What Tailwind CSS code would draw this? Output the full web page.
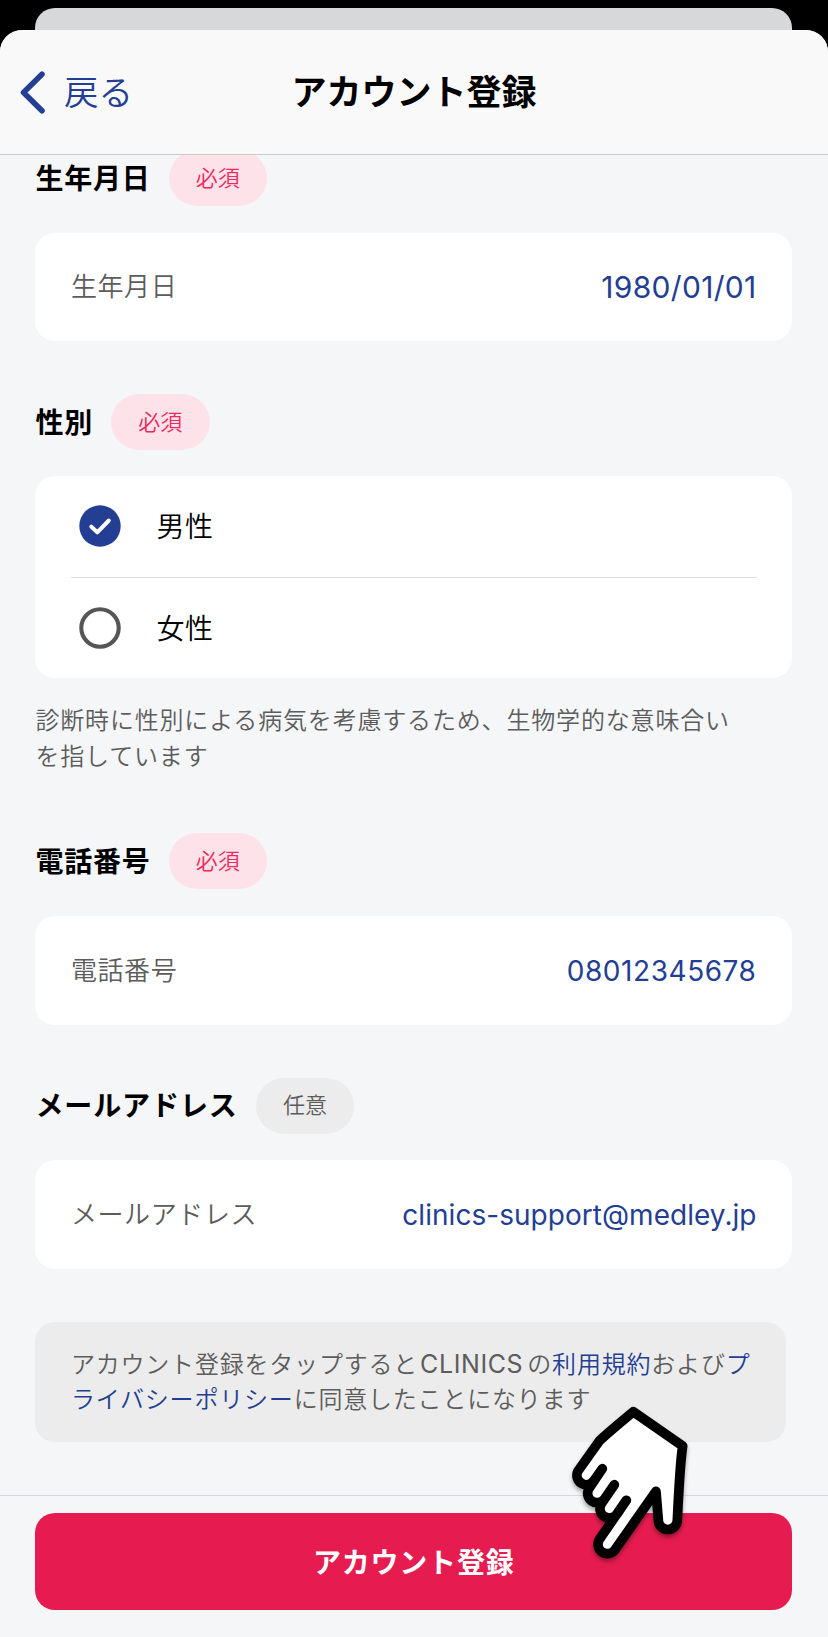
<!DOCTYPE html>
<html lang="ja">

<head>
    <meta charset="UTF-8">
    <title>アカウント登録</title>
    <script src="https://cdn.jsdelivr.net/npm/@tailwindcss/browser@4"></script>
</head>

<body class="bg-black font-['Inter','Noto_Sans_CJK_JP',sans-serif]">
    <div class="flex flex-col h-[1637px] pt-2 overflow-hidden">

        <!-- Sheet behind -->
        <div class="h-[44px] -mb-[22px] ml-[35.4px] mr-9 rounded-t-[20px] bg-[#d7d8da] shrink-0"></div>

        <!-- Current sheet -->
        <div class="relative flex flex-col grow rounded-t-[22px] overflow-hidden bg-[#f5f6f8]">

            <!-- Header -->
            <header class="relative z-10 grid grid-cols-3 items-center h-[125px] pt-[1px] shrink-0 bg-[#f9f9fa] border-b border-[#c9cacc]">
                <a href="#" class="flex items-center pl-5 text-[#233e92] text-[34.5px]">
                    <svg class="w-[26px] h-[44px]" viewBox="0 0 26 44" fill="none" stroke="currentColor" stroke-width="5.6" stroke-linecap="round" stroke-linejoin="round">
                        <path d="M22 3.2 L3.5 21.5 L22 39.8" />
                    </svg>
                    <span class="ml-[18px] font-[350]">戻る</span>
                </a>
                <h1 class="text-[35px] font-bold text-center whitespace-nowrap">アカウント登録</h1>
            </header>

            <main class="pl-[35.4px] pr-9 -mt-[5px]">

                <!-- Birth date -->
                <div class="flex items-center h-14 gap-[18px]">
                    <h2 class="pt-[2px] text-[28px] tracking-[0.8px] font-bold">生年月日</h2>
                    <span class="flex items-center justify-center w-[98.5px] h-14 rounded-full bg-[#fee2e9] text-[#ec2a5e] text-[22px] font-[350]">必須</span>
                </div>
                <div class="flex items-center justify-between h-[108px] mt-[27px] px-[35.5px] rounded-[20px] bg-white">
                    <span class="pb-[2px] text-[26px] tracking-[0.6px] text-[#5c5c5c] font-[350]">生年月日</span>
                    <span class="text-[30px] tracking-[0.3px] text-[#233e92]">1980/01/01</span>
                </div>

                <!-- Gender -->
                <div class="flex items-center h-14 gap-[18px] mt-[53px]">
                    <h2 class="pt-[2px] text-[28px] tracking-[0.8px] font-bold">性別</h2>
                    <span class="flex items-center justify-center w-[98.5px] h-14 rounded-full bg-[#fee2e9] text-[#ec2a5e] text-[22px] font-[350]">必須</span>
                </div>
                <div class="h-[202px] mt-[26px] px-[35.5px] rounded-[20px] bg-white">
                    <label class="flex items-center h-[102px] pl-[8.5px] gap-[35px] border-b border-[#dcdcdc] text-[28px] tracking-[0.5px]">
                        <svg class="w-[42px] h-[42px] -mt-[2px]" viewBox="0 0 42 42">
                            <circle cx="21" cy="21" r="20.7" fill="#233e92" />
                            <path d="M12.3 21.7 L18.3 27.3 L29.8 15.5" fill="none" stroke="#fff" stroke-width="4" stroke-linecap="round" stroke-linejoin="round" />
                        </svg>
                        <span class="font-[350]">男性</span>
                    </label>
                    <label class="flex items-center h-[100px] pl-[8.5px] gap-[35px] text-[28px] tracking-[0.5px]">
                        <svg class="w-[42px] h-[42px]" viewBox="0 0 42 42">
                            <circle cx="21" cy="21" r="18.7" fill="none" stroke="#565656" stroke-width="4.1" />
                        </svg>
                        <span class="pt-[2px] font-[350]">女性</span>
                    </label>
                </div>
                <p class="mt-[25px] text-[24px] leading-[36px] tracking-[0.83px] text-[#5c5c5c] font-[350] whitespace-nowrap">
                    診断時に性別による病気を考慮するため、生物学的な意味合い<br>を指しています
                </p>

                <!-- Phone number -->
                <div class="flex items-center h-14 gap-[18px] mt-[58px]">
                    <h2 class="pt-[2px] text-[28px] tracking-[0.8px] font-bold">電話番号</h2>
                    <span class="flex items-center justify-center w-[98.5px] h-14 rounded-full bg-[#fee2e9] text-[#ec2a5e] text-[22px] font-[350]">必須</span>
                </div>
                <div class="flex items-center justify-between h-[109px] mt-[27px] px-[35.5px] rounded-[20px] bg-white">
                    <span class="text-[26px] tracking-[0.6px] text-[#5c5c5c] font-[350]">電話番号</span>
                    <span class="text-[28px] tracking-[0.55px] text-[#233e92]">08012345678</span>
                </div>

                <!-- Mail address -->
                <div class="flex items-center h-14 gap-[18px] mt-[53px]">
                    <h2 class="text-[28px] tracking-[0.9px] font-bold">メールアドレス</h2>
                    <span class="flex items-center justify-center w-[98.5px] h-14 pb-[1px] rounded-full bg-[#ececec] text-[#5c5c5c] text-[22px] font-[350]">任意</span>
                </div>
                <div class="flex items-center justify-between h-[109px] mt-[26px] px-[35.5px] rounded-[20px] bg-white">
                    <span class="text-[26px] tracking-[0.6px] text-[#5c5c5c] font-[350]">メールアドレス</span>
                    <span class="text-[28px] tracking-[0.04px] text-[#233e92]">clinics-support@medley.jp</span>
                </div>

                <!-- Terms -->
                <p class="h-[120px] mt-[53px] mr-[6px] pt-[25px] pl-[35.5px] rounded-[20px] bg-[#ececec] text-[24px] leading-[35px] tracking-[0.8px] text-[#5c5c5c] font-[350] whitespace-nowrap">
                    アカウント登録をタップすると<span class="ml-[2px] mr-[4px] text-[25px] leading-none tracking-[0.6px] font-normal">CLINICS</span>の<a href="#" class="text-[#233e92]">利用規約</a>および<a href="#" class="text-[#233e92]">プ<br>ライバシーポリシー</a>に同意したことになります
                </p>
            </main>

            <!-- Submit -->
            <footer class="mt-auto pl-[35.4px] pr-9 pt-[17px] pb-[27px] border-t border-[#d6d8db]">
                <button class="flex items-center justify-center w-full h-[97px] pt-[2px] rounded-[20px] bg-[#e61c50] text-white text-[28px] tracking-[0.8px] font-bold">アカウント登録</button>
            </footer>
        </div>
    </div>

    <!-- Pointing hand over the button -->
    <svg class="absolute left-[550px] top-[1390px] w-[160px] h-[180px] drop-shadow-[0_3px_2px_rgba(0,0,0,0.35)]" viewBox="0 0 480 540">
        <path fill="#fff" stroke="#000" stroke-width="29" stroke-linejoin="round" stroke-linecap="round"
            d="M250 65 L398 168 Q390 220 382 390 A28 28 0 0 1 325 390 L318 304 L195 479 A28 28 0 0 1 149 447 L229 331 L201 372 A28 28 0 0 1 155 340 L193 284 L164 326 A28 28 0 0 1 118 294 L157 236 L131 273 A28 28 0 0 1 84 243 L148 153 Q162 138 250 65 Z" />
    </svg>
</body>

</html>
